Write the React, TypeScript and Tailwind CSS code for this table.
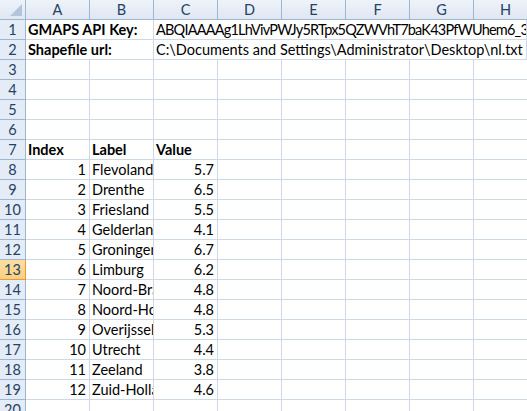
type Cell = { text?: string; span?: number; right?: boolean; bold?: boolean; fill?: boolean; track?: string }

const cols = ["A", "B", "C", "D", "E", "F", "G", "H"]

const provinces: [number, string, string][] = [
  [1, "Flevoland", "5.7"],
  [2, "Drenthe", "6.5"],
  [3, "Friesland", "5.5"],
  [4, "Gelderland", "4.1"],
  [5, "Groningen", "6.7"],
  [6, "Limburg", "6.2"],
  [7, "Noord-Brabant", "4.8"],
  [8, "Noord-Holland", "4.8"],
  [9, "Overijssel", "5.3"],
  [10, "Utrecht", "4.4"],
  [11, "Zeeland", "3.8"],
  [12, "Zuid-Holland", "4.6"],
]

const blank: Cell[] = cols.map(() => ({}))

const rows: Cell[][] = [
  [
    { text: "GMAPS API Key:", span: 2, bold: true },
    { text: "ABQIAAAAg1LhVivPWJy5RTpx5QZWVhT7baK43PfWUhem6_3", fill: true, track: "tracking-[-0.8px]" },
  ],
  [
    { text: "Shapefile url:", span: 2, bold: true },
    { text: "C:\\Documents and Settings\\Administrator\\Desktop\\nl.txt", fill: true },
  ],
  blank,
  blank,
  blank,
  blank,
  [{ text: "Index", bold: true }, { text: "Label", bold: true }, { text: "Value", bold: true }, {}, {}, {}, {}, {}],
  ...provinces.map(([i, label, v]) => [
    { text: String(i), right: true },
    { text: label },
    { text: v, right: true },
    {},
    {},
    {},
    {},
    {},
  ]),
  blank,
]

function GridCell({ cell }: { cell: Cell }) {
  const span = cell.span ?? 1
  const width = cell.fill ? "flex-1 min-w-0" : span === 2 ? "w-[128px] shrink-0" : "w-[64px] shrink-0"
  return (
    <div
      className={`${width} h-[20px] border-r border-b border-[#d0d7e5] overflow-hidden whitespace-nowrap px-[2px] leading-[20px] text-black ${
        cell.right ? "text-right pr-[3px]" : "text-left"
      } ${cell.bold ? "font-bold" : ""} ${cell.track ?? ""}`}
    >
      {cell.text}
    </div>
  )
}

export default function App() {
  return (
    <div
      className="w-[527px] h-[411px] overflow-hidden bg-white text-[14.5px]"
      style={{ fontFamily: "Lato, 'Open Sans', sans-serif" }}
    >
      {/* column headers */}
      <div className="flex h-[20px]">
        <div className="relative w-[26px] shrink-0 border-r border-b border-[#9eb6ce] bg-gradient-to-b from-[#eef3fa] to-[#dfe7f2]">
          <div className="absolute right-[3px] bottom-[3px] w-0 h-0 border-l-[12px] border-l-transparent border-b-[12px] border-b-[#b3c4dc]" />
        </div>
        {cols.map((c) => (
          <div
            key={c}
            className="w-[64px] shrink-0 border-r border-b border-[#9eb6ce] bg-gradient-to-b from-[#eef3fa] to-[#dfe7f2] text-center leading-[19px] text-[#27415f]"
          >
            {c}
          </div>
        ))}
      </div>

      {rows.map((cells, r) => {
        const active = r + 1 === 13
        return (
          <div key={r} className="flex h-[20px]">
            <div
              className={`w-[26px] shrink-0 border-r border-b text-center leading-[19px] text-[#27415f] ${
                active
                  ? "bg-gradient-to-b from-[#fbe0a5] to-[#f8cf7f] border-[#f29536]"
                  : "bg-[#e4ecf7] border-[#9eb6ce]"
              }`}
            >
              {r + 1}
            </div>
            {cells.map((cell, i) => (
              <GridCell key={i} cell={cell} />
            ))}
          </div>
        )
      })}
    </div>
  )
}
